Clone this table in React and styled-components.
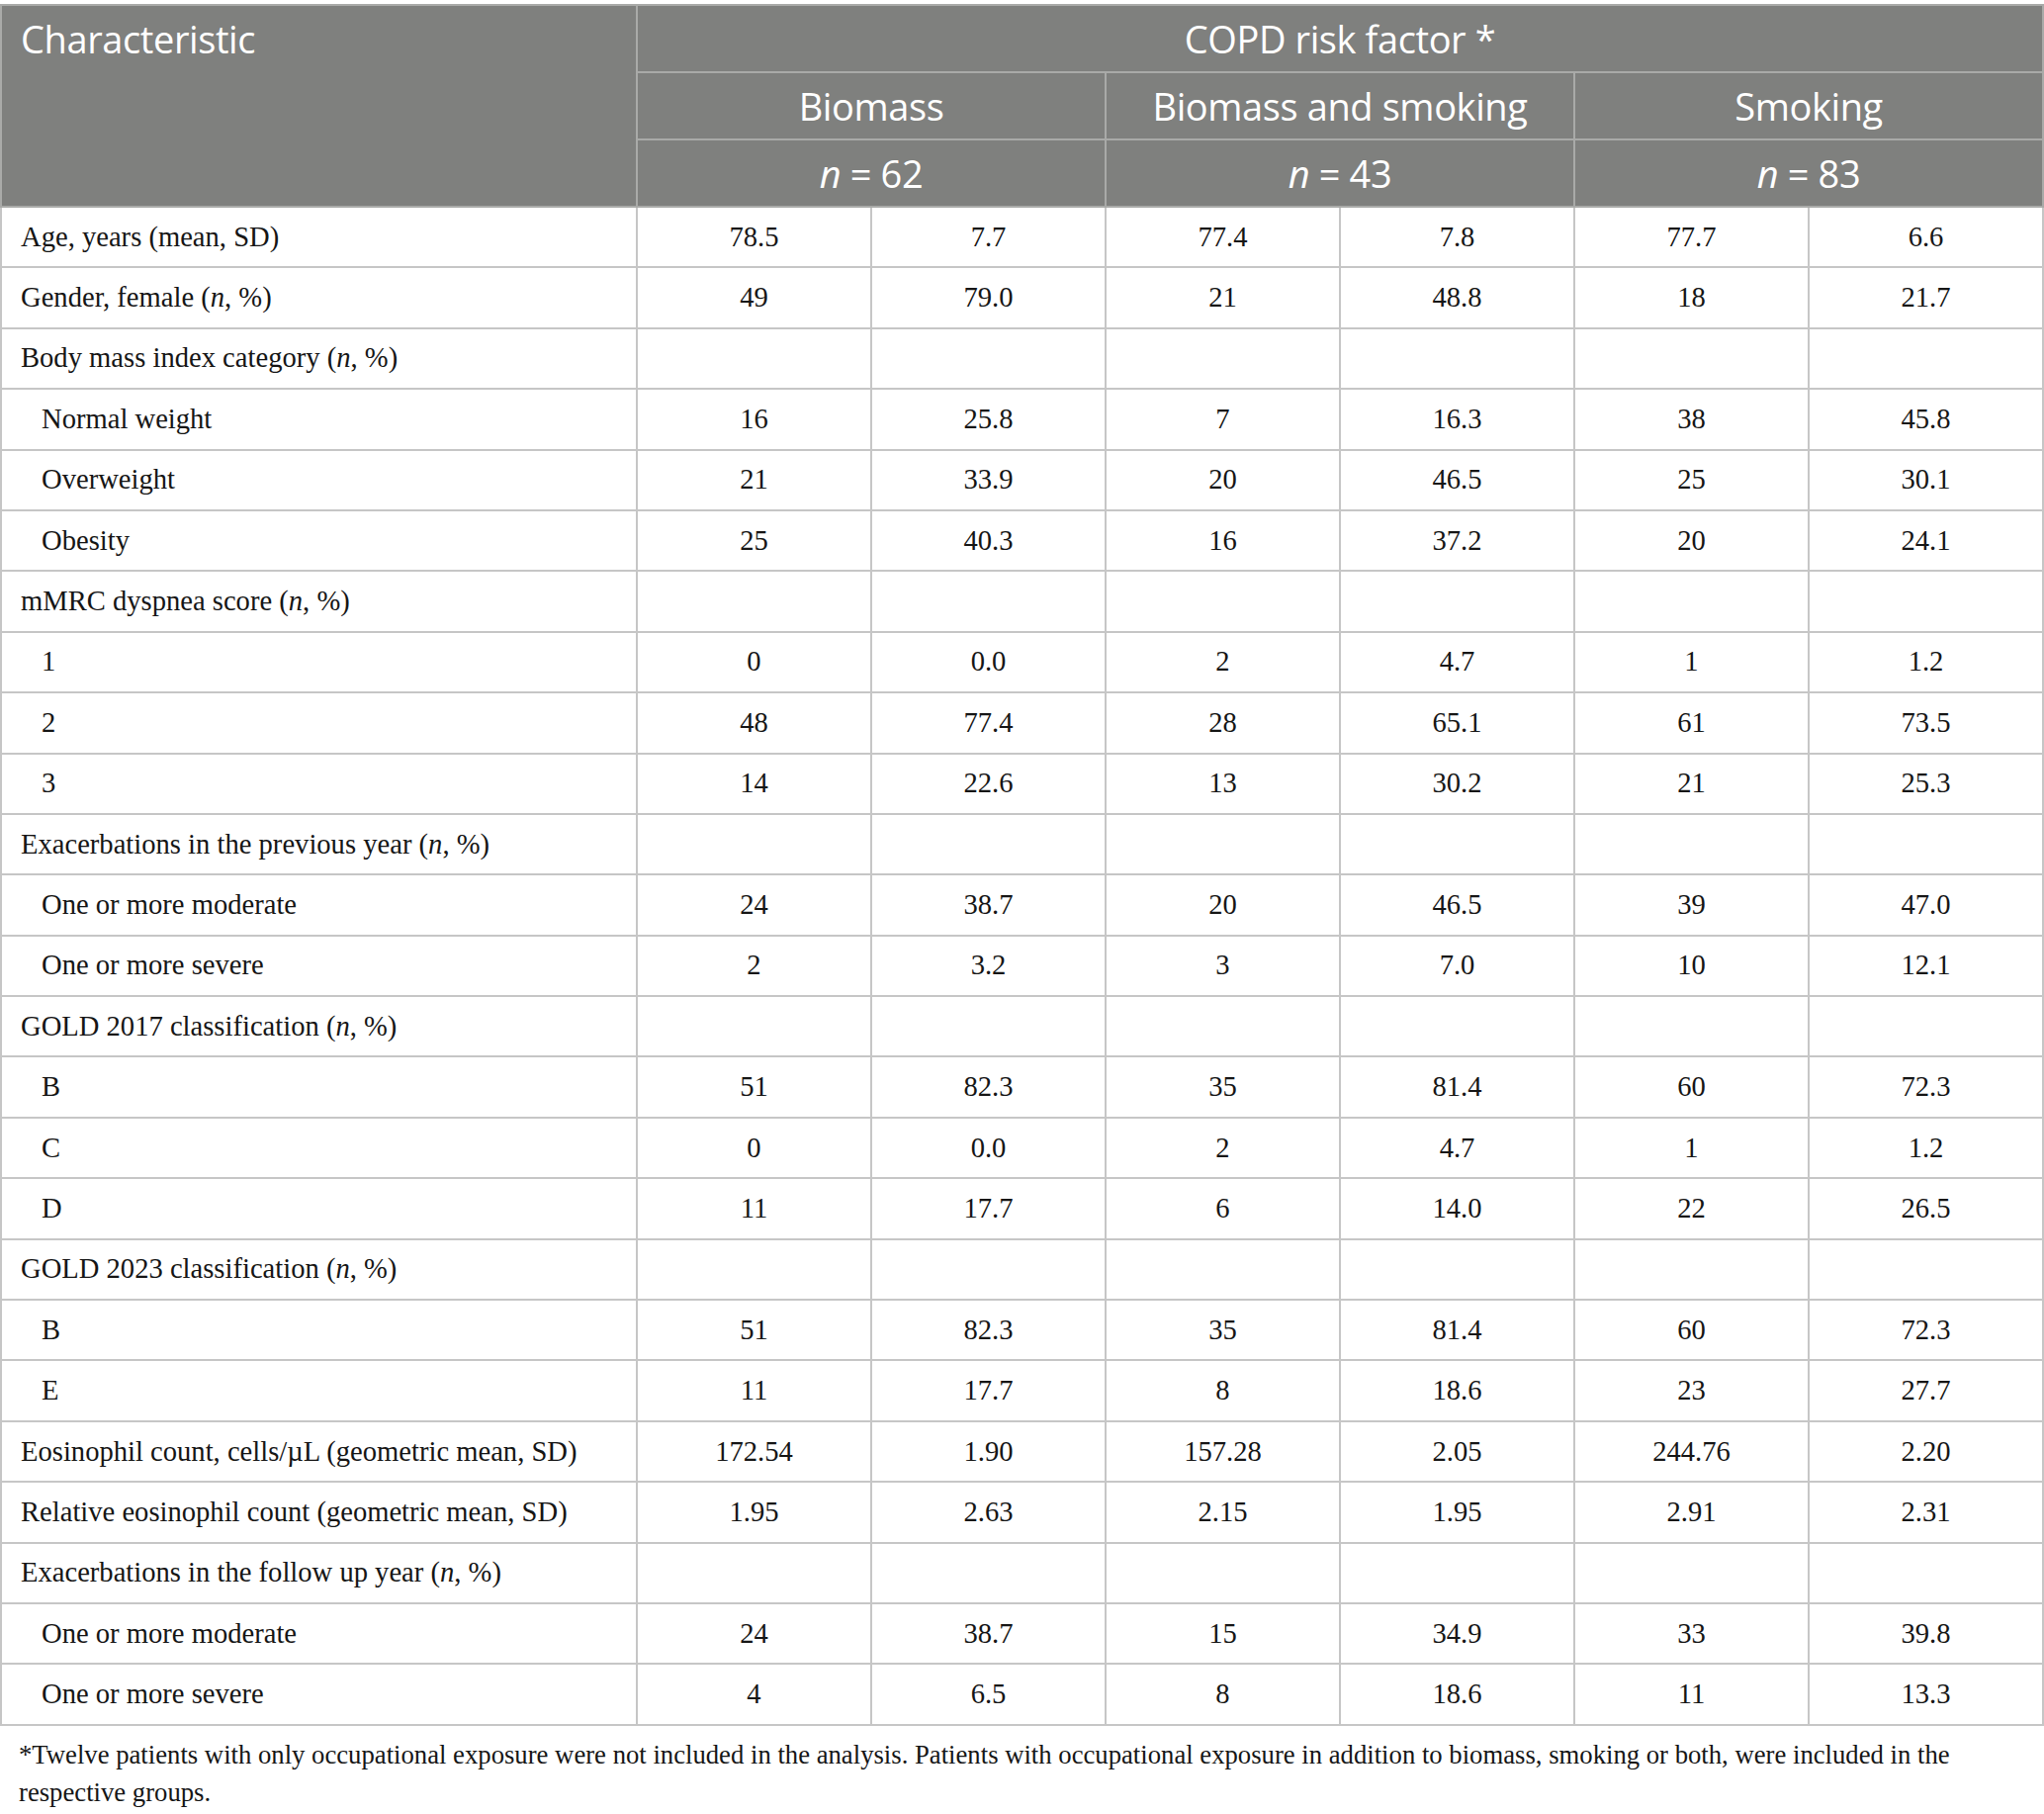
import React from "react";
import styled, { createGlobalStyle } from "styled-components";

const GlobalStyle = createGlobalStyle`
  html, body {
    margin: 0;
    padding: 0;
    background: #ffffff;
  }
`;

const rows = [
  { label: <>Age, years (mean, SD)</>, vals: ["78.5", "7.7", "77.4", "7.8", "77.7", "6.6"] },
  { label: <>Gender, female (<i>n</i>, %)</>, vals: ["49", "79.0", "21", "48.8", "18", "21.7"] },
  { label: <>Body mass index category (<i>n</i>, %)</>, vals: null },
  { label: "Normal weight", sub: true, vals: ["16", "25.8", "7", "16.3", "38", "45.8"] },
  { label: "Overweight", sub: true, vals: ["21", "33.9", "20", "46.5", "25", "30.1"] },
  { label: "Obesity", sub: true, vals: ["25", "40.3", "16", "37.2", "20", "24.1"] },
  { label: <>mMRC dyspnea score (<i>n</i>, %)</>, vals: null },
  { label: "1", sub: true, vals: ["0", "0.0", "2", "4.7", "1", "1.2"] },
  { label: "2", sub: true, vals: ["48", "77.4", "28", "65.1", "61", "73.5"] },
  { label: "3", sub: true, vals: ["14", "22.6", "13", "30.2", "21", "25.3"] },
  { label: <>Exacerbations in the previous year (<i>n</i>, %)</>, vals: null },
  { label: "One or more moderate", sub: true, vals: ["24", "38.7", "20", "46.5", "39", "47.0"] },
  { label: "One or more severe", sub: true, vals: ["2", "3.2", "3", "7.0", "10", "12.1"] },
  { label: <>GOLD 2017 classification (<i>n</i>, %)</>, vals: null },
  { label: "B", sub: true, vals: ["51", "82.3", "35", "81.4", "60", "72.3"] },
  { label: "C", sub: true, vals: ["0", "0.0", "2", "4.7", "1", "1.2"] },
  { label: "D", sub: true, vals: ["11", "17.7", "6", "14.0", "22", "26.5"] },
  { label: <>GOLD 2023 classification (<i>n</i>, %)</>, vals: null },
  { label: "B", sub: true, vals: ["51", "82.3", "35", "81.4", "60", "72.3"] },
  { label: "E", sub: true, vals: ["11", "17.7", "8", "18.6", "23", "27.7"] },
  { label: "Eosinophil count, cells/µL (geometric mean, SD)", vals: ["172.54", "1.90", "157.28", "2.05", "244.76", "2.20"] },
  { label: "Relative eosinophil count (geometric mean, SD)", vals: ["1.95", "2.63", "2.15", "1.95", "2.91", "2.31"] },
  { label: <>Exacerbations in the follow up year (<i>n</i>, %)</>, vals: null },
  { label: "One or more moderate", sub: true, vals: ["24", "38.7", "15", "34.9", "33", "39.8"] },
  { label: "One or more severe", sub: true, vals: ["4", "6.5", "8", "18.6", "11", "13.3"] },
];

const groups = [
  { name: "Biomass", n: "62" },
  { name: "Biomass and smoking", n: "43" },
  { name: "Smoking", n: "83" },
];

const App = () => {
  return (
    <Page>
      <GlobalStyle />
      <Table>
        <colgroup>
          <col style={{ width: 643 }} />
          {[0, 1, 2, 3, 4, 5].map((i) => (
            <col key={i} />
          ))}
        </colgroup>
        <thead>
          <HeadRow>
            <HeadCell rowSpan={3} $left>
              Characteristic
            </HeadCell>
            <HeadCell colSpan={6}>COPD risk factor *</HeadCell>
          </HeadRow>
          <HeadRow>
            {groups.map((g) => (
              <HeadCell key={g.name} colSpan={2}>
                {g.name}
              </HeadCell>
            ))}
          </HeadRow>
          <HeadRow>
            {groups.map((g) => (
              <HeadCell key={g.name} colSpan={2}>
                <i>n</i> = {g.n}
              </HeadCell>
            ))}
          </HeadRow>
        </thead>
        <tbody>
          {rows.map((r, i) => (
            <BodyRow key={i}>
              <LabelCell $sub={r.sub}>{r.label}</LabelCell>
              {(r.vals || ["", "", "", "", "", ""]).map((v, j) => (
                <ValueCell key={j}>{v}</ValueCell>
              ))}
            </BodyRow>
          ))}
        </tbody>
      </Table>
      <Footnote>
        *Twelve patients with only occupational exposure were not included in the analysis. Patients with
        occupational exposure in addition to biomass, smoking or both, were included in the respective groups.
      </Footnote>
    </Page>
  );
};

// 레이아웃
const Page = styled.div`
  width: 2067px;
  padding-top: 4px;
`;

const Table = styled.table`
  width: 2067px;
  border-collapse: collapse;
  table-layout: fixed;
`;

const HeadRow = styled.tr`
  height: 68px;
`;

const HeadCell = styled.th`
  background-color: #7f807e;
  color: #ffffff;
  font-family: "Open Sans", "Noto Sans", sans-serif;
  font-weight: 400;
  font-size: 38px;
  letter-spacing: -0.4px;
  border: 2px solid #a9aaa8;
  text-align: ${(p) => (p.$left ? "left" : "center")};
  vertical-align: ${(p) => (p.$left ? "top" : "middle")};
  padding: ${(p) => (p.$left ? "11px 19px" : "0 10px")};
  line-height: 44px;
  & i {
    font-style: italic;
  }
`;

const BodyRow = styled.tr`
  height: 61.4px;
`;

const cellBase = `
  border: 2px solid #c6c6c6;
  font-family: "Liberation Serif", "Times New Roman", serif;
  font-size: 28.6px;
  color: #161616;
  vertical-align: middle;
  padding: 0;
`;

const LabelCell = styled.td`
  ${cellBase}
  text-align: left;
  padding-left: ${(p) => (p.$sub ? "40px" : "19px")};
`;

const ValueCell = styled.td`
  ${cellBase}
  text-align: center;
`;

const Footnote = styled.p`
  margin: 10px 0 0;
  padding: 0 19px;
  font-family: "Liberation Serif", "Times New Roman", serif;
  font-size: 26.7px;
  line-height: 38px;
  color: #161616;
`;

export default App;
